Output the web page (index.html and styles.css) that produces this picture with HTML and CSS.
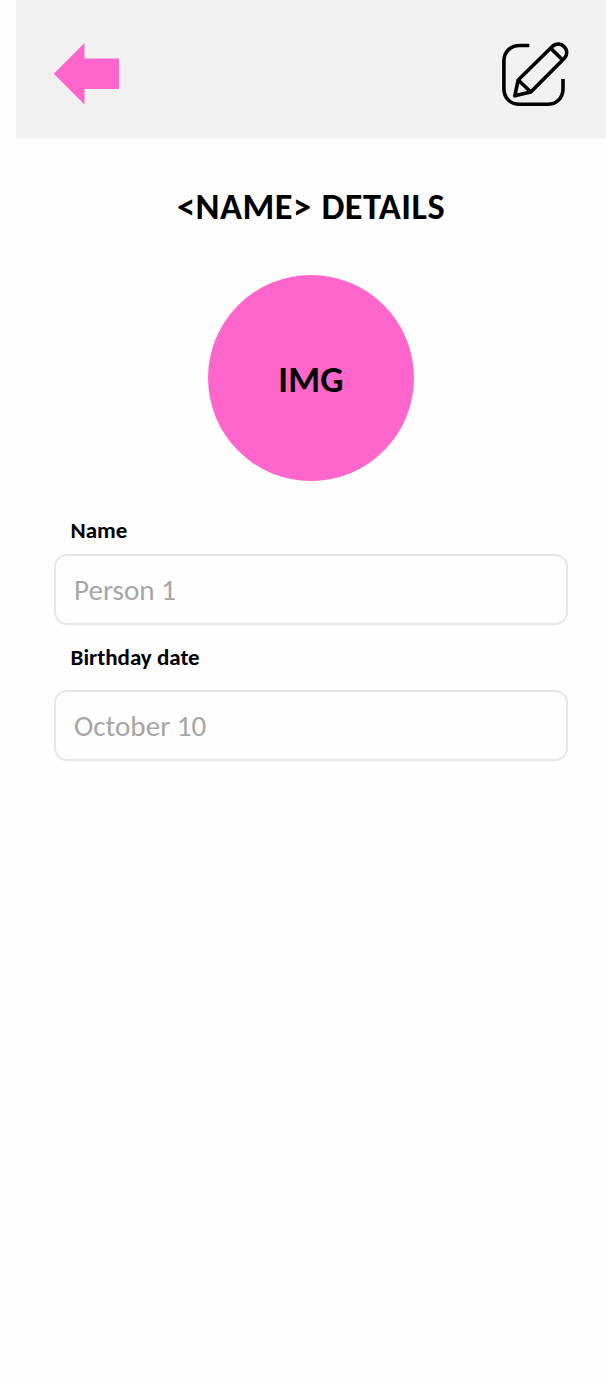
FILE: index.html
```html
<!DOCTYPE html>
<html lang="en">
<head>
<meta charset="utf-8">
<title>Details</title>
<link rel="stylesheet" href="styles.css">
</head>
<body>
<div class="screen">
  <header class="bar">
    <svg class="back" viewBox="0 0 66 62" aria-label="Back"><path d="M-.3 30.7 30.5 0V15.5H65V46H30.5V61.5Z"/></svg>
    <svg class="edit" viewBox="500 40 70 68" aria-label="Edit"><path d="M529.3 45.5H519.5C510.5 45.5 503.9 52 503.9 61V88.7C503.9 97.8 510.5 104.3 519.5 104.3H547.5C556.5 104.3 563 97.8 563 88.7V79"/><path d="M518.2 80 552.8 46C560.8 39.6 571.5 50.5 564.4 58.3L530.8 92 514.8 95.8ZM518.2 80 530.8 92M550.8 48.4 562.4 59.8"/></svg>
  </header>
  <main class="content">
    <h1 class="title">&lt;NAME&gt; DETAILS</h1>
    <div class="avatar"><span>IMG</span></div>
    <div class="field">
      <div class="label">Name</div>
      <div class="box"><span>Person 1</span></div>
    </div>
    <div class="field date">
      <div class="label">Birthday date</div>
      <div class="box"><span>October 10</span></div>
    </div>
  </main>
</div>
</body>
</html>
```
FILE: styles.css
```css
* { box-sizing: border-box; }
body { margin: 0; background: #fefefe; font-family: Carlito, Lato, sans-serif; color: #000; }
.screen { margin-left: 16px; min-height: 1381px; }
.bar { height: 138px; padding: 41px 36px 0 38px; background: #f1f1f1; display: flex; justify-content: space-between; align-items: flex-start; }
.back { width: 66px; height: 62px; margin-top: 2px; fill: #ff66cc; }
.edit { width: 70px; height: 68px; margin-top: -1px; fill: none; stroke: #000; stroke-width: 3.6; stroke-linejoin: round; }
.content { padding: 48px 38px 0; display: flex; flex-direction: column; }
.title { margin: 0; height: 44px; line-height: 42px; font-size: 36.4px; font-weight: 700; font-kerning: normal; letter-spacing: 0.5px; word-spacing: 1px; text-align: center; white-space: nowrap; }
.avatar { width: 206px; height: 206px; margin: 45px auto 0; padding-top: 2px; border-radius: 50%; background: #ff66cc; display: flex; align-items: center; justify-content: center; font-size: 36.4px; letter-spacing: 0.3px; font-weight: 700; }
.field { margin-top: 34px; }
.date { margin-top: 17px; }
.label { height: 32px; line-height: 31px; margin-left: 16.5px; font-size: 23px; font-weight: 700; }
.box { height: 71px; margin-top: 7px; padding-left: 18px; border: 2px solid #e6e6e6; border-radius: 13px; display: flex; align-items: center; font-size: 29.1px; color: #a6a6a6; }
.date .box { margin-top: 16px; }
```
